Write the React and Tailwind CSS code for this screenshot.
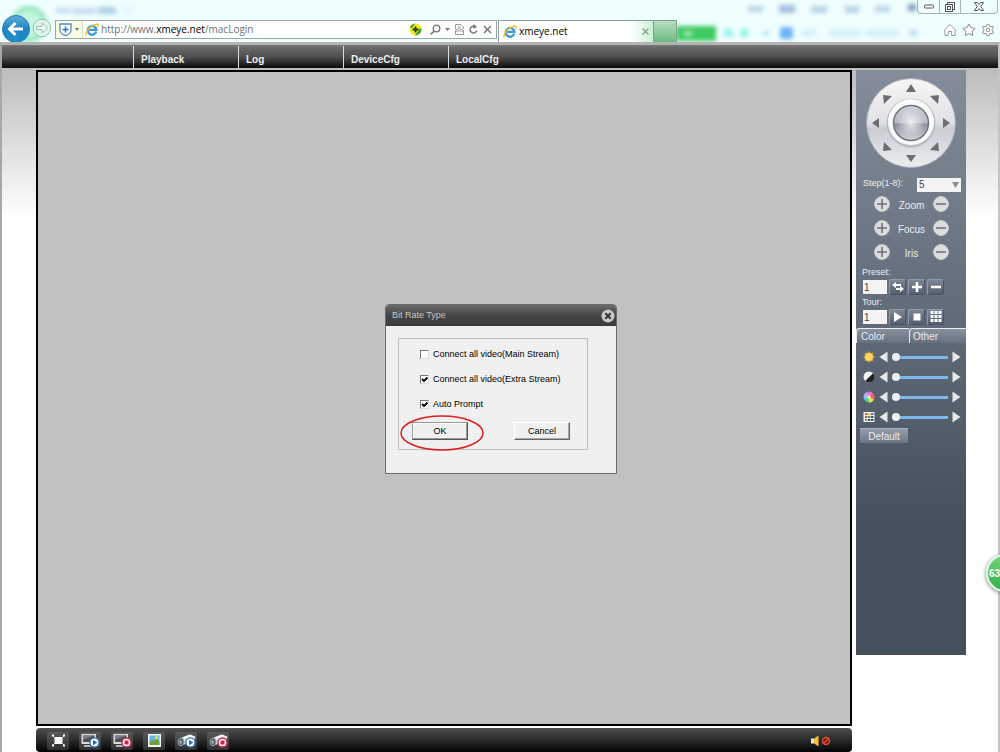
import React, { useState } from 'react';
import { Star, Settings } from 'lucide-react';

const NAV_ITEMS = ['Playback', 'Log', 'DeviceCfg', 'LocalCfg'];

const PTZ_ARROWS = [
    { name: 'Up', x: 45, y: 10, d: 'M-5 4 L0 -4 L5 4Z' },
    { name: 'Up right', x: 69, y: 21, d: 'M-5 -3 L4 -4 L3 5Z' },
    { name: 'Right', x: 80, y: 45, d: 'M-3 -5 L4 0 L-3 5Z' },
    { name: 'Down right', x: 69, y: 69, d: 'M3 -5 L4 4 L-5 3Z' },
    { name: 'Down', x: 45, y: 80, d: 'M-5 -3 L5 -3 L0 4Z' },
    { name: 'Down left', x: 21, y: 69, d: 'M-3 -5 L5 3 L-4 4Z' },
    { name: 'Left', x: 10, y: 45, d: 'M3 -5 L-4 0 L3 5Z' },
    { name: 'Up left', x: 21, y: 21, d: 'M-4 -4 L5 -3 L-3 5Z' },
];

const IeLogo = () => (
    <svg viewBox="0 0 14 14" className="w-[14px] h-[14px] shrink-0" aria-hidden="true">
        <path d="M11.3 8.7 A4.4 4.4 0 1 1 11.5 6.9 L4 6.9" fill="none" stroke="#3a9bdc" strokeWidth="2.3" />
        <path d="M1.4 12.6 C-0.6 10.5 5 2.5 11 1.2 C13.6 0.7 13.6 2.2 12.6 4" fill="none" stroke="#f0bd2c" strokeWidth="1.4" />
    </svg>
);

const BackdropBlurs = () => (
    <div className="absolute inset-0 overflow-hidden pointer-events-none" aria-hidden="true">
        <svg className="absolute left-0 top-0 w-[320px] h-[42px]" viewBox="0 0 320 42">
            <g style={{ filter: 'blur(2px)' }}>
                <circle cx="29" cy="24" r="16" fill="#c3f5dc" stroke="#8de6bd" strokeWidth="4" />
                <g fill="#c3dcf0">
                    <rect x="56" y="8" width="14" height="5" />
                    <rect x="72" y="8" width="24" height="6" />
                    <rect x="98" y="7" width="18" height="7" fill="#afd0e8" />
                    <rect x="124" y="8" width="8" height="4" fill="#ddeffa" />
                </g>
            </g>
        </svg>
        <svg className="absolute right-0 top-0 w-[330px] h-[42px]" viewBox="0 0 330 42">
            <g style={{ filter: 'blur(2px)' }}>
                <g fill="#b9d5e8">
                    <rect x="78" y="6" width="15" height="6" />
                    <rect x="109" y="5" width="16" height="8" fill="#a3c0dc" />
                    <rect x="141" y="6" width="16" height="7" />
                    <rect x="175" y="6" width="14" height="7" />
                    <rect x="205" y="6" width="15" height="6" />
                    <rect x="238" y="4" width="8" height="7" fill="#7f9fc0" />
                </g>
                <rect x="6" y="26" width="40" height="15" fill="#3ecb62" />
                <rect x="14" y="31" width="8" height="5" fill="#a5ecb8" />
                <rect x="54" y="29" width="9" height="8" fill="#9af4ec" />
                <rect x="71" y="29" width="7" height="8" fill="#8af2e4" />
                <rect x="92" y="32" width="7" height="3" fill="#a5dcf0" />
                <rect x="110" y="27" width="13" height="12" rx="3" fill="#6fb2fb" />
                <g fill="#d2eef8">
                    <rect x="132" y="30" width="14" height="6" />
                    <rect x="160" y="30" width="30" height="6" />
                    <rect x="195" y="30" width="34" height="6" />
                    <rect x="240" y="30" width="7" height="6" fill="#b8dcf2" />
                </g>
            </g>
        </svg>
    </div>
);

const AddressField = () => {
    const [editing, setEditing] = useState(false);
    const [url, setUrl] = useState('http://www.xmeye.net/macLogin');
    const [before, after] = url.split('xmeye.net');

    if (editing) {
        return (
            <input
                type="text"
                aria-label="Address"
                autoFocus
                value={url}
                onChange={(e) => setUrl(e.target.value)}
                onBlur={() => setEditing(false)}
                className="flex-1 min-w-0 text-[10px] outline-none"
            />
        );
    }
    return (
        <button type="button" onClick={() => setEditing(true)} className="flex-1 min-w-0 text-left text-[10px] text-[#6c7378] whitespace-nowrap">
            {before}<span className="text-black">{after === undefined ? '' : 'xmeye.net'}</span>{after}
        </button>
    );
};

const BrowserBar = () => (
    <header className="relative h-[42px] bg-[#effefe] font-['Open_Sans',sans-serif]">
        <BackdropBlurs />
        <div className="relative h-full flex pt-[20px]">
            <div className="w-[55px] shrink-0 flex items-center -mt-[6px]">
                <button aria-label="Back" className="ml-px shrink-0">
                    <svg viewBox="0 0 30 28" className="w-[30px] h-[28px]">
                        <defs>
                            <linearGradient id="back" x1="0" y1="0" x2="0" y2="1">
                                <stop offset="0" stopColor="#5fb0dc" />
                                <stop offset="0.5" stopColor="#1f83bf" />
                                <stop offset="1" stopColor="#1b8fd0" />
                            </linearGradient>
                        </defs>
                        <circle cx="15" cy="15" r="13.5" fill="url(#back)" stroke="#2b7fb0" />
                        <path d="M22 15 H9 M14.5 9 L8.5 15 L14.5 21" fill="none" stroke="#fff" strokeWidth="3" />
                    </svg>
                </button>
                <button aria-label="Forward" className="ml-px shrink-0">
                    <svg viewBox="0 0 20 20" className="w-[20px] h-[20px]">
                        <circle cx="10" cy="10" r="8.8" fill="#d9f5e8" stroke="#9dbdb8" />
                        <path d="M4.5 8.5 H10 V5 L15.5 10 L10 15 V11.5 H4.5Z" fill="#effbf7" stroke="#9dbdb8" />
                    </svg>
                </button>
            </div>
            <div className="w-[442px] h-[19px] shrink-0 flex items-center border border-[#9aa5aa] bg-white">
                <button aria-label="Site security" className="h-full w-[27px] shrink-0 flex items-center justify-center gap-[3px] bg-[#fbfde2] border-r border-[#d5dcc0]">
                    <svg viewBox="0 0 13 13" className="w-[13px] h-[13px]">
                        <path d="M1 1 H12 V7 C12 10 9 12 6.5 12.5 C4 12 1 10 1 7Z" fill="#fff" stroke="#4b8bc8" strokeWidth="1.3" />
                        <path d="M6.5 3.5 V9.5 M3.5 6.5 H9.5" stroke="#2f6fb5" strokeWidth="1.5" />
                    </svg>
                    <svg viewBox="0 0 4 3" className="w-[4px] h-[3px]"><path d="M0 0 H4 L2 3Z" fill="#777" /></svg>
                </button>
                <div className="w-[18px] shrink-0 pl-[2px]"><IeLogo /></div>
                <AddressField />
                <div className="flex items-center gap-[5px] pr-[4px] text-[#777]">
                    <button aria-label="Add site">
                        <svg viewBox="0 0 13 13" className="w-[13px] h-[13px]">
                            <circle cx="6.5" cy="6.5" r="6" fill="#f5e71c" />
                            <path d="M6 12.5 A6 6 0 0 0 12.5 6 C11 4 9 8 6 12.5Z M1 5 A6 6 0 0 1 6 0.5 L3 5Z" fill="#3ea53a" />
                            <path d="M6.5 3.5 V9.5 M3.5 6.5 H9.5" stroke="#1d3d10" strokeWidth="1.8" />
                        </svg>
                    </button>
                    <button aria-label="Search" className="flex items-center gap-[4px] ml-[3px]">
                        <svg viewBox="0 0 11 11" className="w-[11px] h-[11px]">
                            <circle cx="6.5" cy="4.5" r="3.3" fill="none" stroke="currentColor" strokeWidth="1.3" />
                            <path d="M4.2 7 L0.8 10.4" stroke="currentColor" strokeWidth="1.6" />
                        </svg>
                        <svg viewBox="0 0 5 3" className="w-[5px] h-[3px]"><path d="M0 0 H5 L2.5 3Z" fill="currentColor" /></svg>
                    </button>
                    <button aria-label="Compatibility view">
                        <svg viewBox="0 0 9 11" className="w-[9px] h-[11px]">
                            <path d="M0.5 5 V0.5 H6 L8.5 3 V4 L6.5 6 L4.5 4 L2.5 6Z M0.5 6.5 L2.5 8 L4.5 6 L6.5 8 L8.5 6 V10.5 H0.5Z M2.5 3 H6" fill="none" stroke="#999" />
                        </svg>
                    </button>
                    <button aria-label="Refresh">
                        <svg viewBox="0 0 9 11" className="w-[9px] h-[11px]">
                            <path d="M6.5 2.8 A3.4 3.4 0 1 0 7.8 6.5" fill="none" stroke="currentColor" strokeWidth="1.5" />
                            <path d="M4.5 0 L8 3 L4.5 5Z" fill="currentColor" />
                        </svg>
                    </button>
                    <button aria-label="Stop">
                        <svg viewBox="0 0 9 9" className="w-[9px] h-[9px]"><path d="M1 1 L8 8 M8 1 L1 8" stroke="currentColor" strokeWidth="1.5" /></svg>
                    </button>
                </div>
            </div>
            <div className="ml-px w-[156px] shrink-0 flex items-center px-[4px] gap-[2px] border border-b-0 border-[#8d9a9a] bg-linear-to-r from-white from-85% to-[#c9f2d4]">
                <IeLogo />
                <span className="flex-1 text-[10px] text-black">xmeye.net</span>
                <button aria-label="Close tab">
                    <svg viewBox="0 0 7 7" className="w-[7px] h-[7px]"><path d="M0.5 0.5 L6.5 6.5 M6.5 0.5 L0.5 6.5" stroke="#8a9a8f" strokeWidth="1.3" /></svg>
                </button>
            </div>
            <button aria-label="New tab" className="w-[23px] shrink-0 border border-l-0 border-b-0 border-[#88a090] bg-linear-to-b from-[#b5dfc2] to-[#6db883]" />
            <div className="flex-1 flex justify-end items-center gap-[5px] pr-[5px] pb-[3px] text-[#999]">
                <button aria-label="Home">
                    <svg viewBox="0 0 14 14" className="w-[14px] h-[14px]">
                        <path d="M1 7.5 L7 1.5 L13 7.5 L12 8.2 V12.5 H8.7 V8.5 H5.3 V12.5 H2 V8.2Z" fill="#fff" stroke="currentColor" strokeLinejoin="round" />
                    </svg>
                </button>
                <button aria-label="Favorites"><Star className="w-[14px] h-[14px]" strokeWidth={1.8} fill="#fff" /></button>
                <button aria-label="Tools"><Settings className="w-[14px] h-[14px]" strokeWidth={1.8} fill="#fff" /></button>
            </div>
        </div>
        <div className="absolute right-[2px] top-0 h-[14px] w-[81px] flex border border-t-0 border-[#a7b4b8] rounded-b-[4px]">
            <button aria-label="Minimize" className="w-[22px] flex items-center justify-center border-r border-[#a7b4b8]">
                <svg viewBox="0 0 10 5" className="w-[10px] h-[5px]"><rect x="0.5" y="1" width="9" height="3" rx="1" fill="#fff" stroke="#555" /></svg>
            </button>
            <button aria-label="Restore" className="w-[21px] flex items-center justify-center border-r border-[#a7b4b8]">
                <svg viewBox="0 0 10 10" className="w-[10px] h-[10px]">
                    <rect x="2.5" y="0.5" width="7" height="7" fill="#fff" stroke="#555" />
                    <rect x="0.5" y="2.5" width="7" height="7" fill="#fff" stroke="#555" />
                    <rect x="2.5" y="4.5" width="3" height="3" fill="none" stroke="#555" />
                </svg>
            </button>
            <button aria-label="Close" className="flex-1 flex items-center justify-center">
                <svg viewBox="0 0 10 9" className="w-[10px] h-[9px]">
                    <path d="M0.5 0.5 H3.5 L5 2.5 L6.5 0.5 H9.5 L6.8 4.5 L9.5 8.5 H6.5 L5 6.5 L3.5 8.5 H0.5 L3.2 4.5Z" fill="#fff" stroke="#555" />
                </svg>
            </button>
        </div>
    </header>
);

const PtzPad = () => (
    <div className="relative w-[90px] h-[90px] mx-auto">
        <svg viewBox="0 0 90 90" className="absolute inset-0 w-full h-full" aria-hidden="true">
            <defs>
                <linearGradient id="ring" x1="0" y1="0" x2="0" y2="1">
                    <stop offset="0" stopColor="#f6f6f6" />
                    <stop offset="0.5" stopColor="#e0e1e4" />
                    <stop offset="0.56" stopColor="#c9ccd3" />
                    <stop offset="1" stopColor="#eceef0" />
                </linearGradient>
                <linearGradient id="ball" x1="0" y1="0" x2="0" y2="1">
                    <stop offset="0" stopColor="#ced2d9" />
                    <stop offset="0.48" stopColor="#b5bac3" />
                    <stop offset="0.54" stopColor="#8b929e" />
                    <stop offset="1" stopColor="#d2d6dc" />
                </linearGradient>
                <radialGradient id="shine">
                    <stop offset="0" stopColor="#fff" stopOpacity="0.8" />
                    <stop offset="1" stopColor="#fff" stopOpacity="0" />
                </radialGradient>
            </defs>
            <circle cx="45" cy="45" r="44.5" fill="url(#ring)" stroke="#a6abb4" />
            <circle cx="45" cy="45" r="24.5" fill="#b9bcc3" />
            <circle cx="45" cy="44" r="23" fill="#fafafa" />
            <circle cx="45" cy="45" r="17.5" fill="url(#ball)" stroke="#6f7784" strokeWidth="1.5" />
            <circle cx="45" cy="45" r="14" fill="url(#shine)" />
        </svg>
        {PTZ_ARROWS.map((a) => (
            <button
                key={a.name}
                aria-label={a.name}
                className="absolute w-[12px] h-[12px]"
                style={{ left: a.x - 6, top: a.y - 6 }}
            >
                <svg viewBox="-6 -6 12 12" className="w-[12px] h-[12px]"><path d={a.d} fill="#6b6d70" /></svg>
            </button>
        ))}
    </div>
);

const RoundButton = ({ label, plus }) => (
    <button aria-label={label} className="shrink-0">
        <svg viewBox="0 0 16 16" className="w-[16px] h-[16px]">
            <circle cx="8" cy="8" r="7.5" fill="#dcdddf" stroke="#c4c6ca" />
            <path d={plus ? 'M3 8 H13 M8 3 V13' : 'M3 8 H13'} stroke="#6b6e73" strokeWidth="1.5" />
        </svg>
    </button>
);

const SquareButton = ({ label, children }) => (
    <button
        aria-label={label}
        className="w-[17px] h-[16px] flex items-center justify-center rounded-[2px] border border-t-[#909aa9] border-l-[#909aa9] border-r-[#4b5462] border-b-[#4b5462] bg-linear-to-b from-[#7b8595] to-[#565f6e]"
    >
        <svg viewBox="0 0 12 12" className="w-[12px] h-[12px]">{children}</svg>
    </button>
);

const NumberRow = ({ id, label, children }) => {
    const [value, setValue] = useState('1');
    return (
        <div>
            <label htmlFor={id} className="block pl-[6px] text-[9px] leading-[14px]">{label}</label>
            <div className="flex items-center gap-[2px] pl-[7px] h-[16px]">
                <input
                    id={id}
                    type="text"
                    value={value}
                    onChange={(e) => setValue(e.target.value)}
                    className="w-[24px] h-[14px] bg-[#f4f4f4] text-[#444] text-[10px] leading-[12px] pl-px"
                />
                {children}
            </div>
        </div>
    );
};

const SLIDERS = [
    {
        name: 'Brightness',
        icon: (
            <>
                <path d="M6 0 L7.5 2 L10.2 1.8 L10 4.5 L12 6 L10 7.5 L10.2 10.2 L7.5 10 L6 12 L4.5 10 L1.8 10.2 L2 7.5 L0 6 L2 4.5 L1.8 1.8 L4.5 2Z" fill="#d9a433" />
                <circle cx="6" cy="6" r="3.8" fill="#fbd768" />
            </>
        ),
    },
    {
        name: 'Contrast',
        icon: (
            <>
                <circle cx="6" cy="6" r="5.5" fill="#f3f3f3" />
                <path d="M10 2.2 A5.5 5.5 0 0 1 2.2 10Z" fill="#222" />
            </>
        ),
    },
    {
        name: 'Saturation',
        icon: (
            <>
                <path d="M6 6 L0.5 6 A5.5 5.5 0 0 1 4 0.9Z" fill="#c9a5f5" />
                <path d="M6 6 L4 0.9 A5.5 5.5 0 0 1 10 2.2Z" fill="#f06fd0" />
                <path d="M6 6 L10 2.2 A5.5 5.5 0 0 1 11 8.4Z" fill="#f26a54" />
                <path d="M6 6 L11 8.4 A5.5 5.5 0 0 1 6 11.5Z" fill="#e9e04e" />
                <path d="M6 6 L6 11.5 A5.5 5.5 0 0 1 1.5 9Z" fill="#5ad66a" />
                <path d="M6 6 L1.5 9 A5.5 5.5 0 0 1 0.5 6Z" fill="#4fd8f0" />
                <circle cx="6" cy="6" r="1.8" fill="#fff" opacity="0.7" />
            </>
        ),
    },
    {
        name: 'Hue',
        icon: (
            <>
                <rect x="0.5" y="1" width="11" height="10" fill="#f3f3f3" />
                <path d="M2 3.2 H4.5 M2 6 H4.5" stroke="#d0503c" strokeWidth="1.8" />
                <path d="M5 3.2 H7.5" stroke="#e8b82d" strokeWidth="1.8" />
                <path d="M8 3.2 H10.5 M8 6 H10.5" stroke="#454e9c" strokeWidth="1.8" />
                <path d="M5 6 H7.5 M2 8.8 H4.5" stroke="#4a9e58" strokeWidth="1.8" />
                <path d="M5 8.8 H7.5 M8 8.8 H10.5" stroke="#2d4354" strokeWidth="1.8" />
            </>
        ),
    },
];

const SliderRow = ({ name, icon }) => {
    const [value, setValue] = useState(0);
    return (
        <div className="flex items-center h-[20px] pl-[7px] pr-[5px]">
            <svg viewBox="0 0 12 12" className="w-[12px] h-[12px] shrink-0" aria-hidden="true">{icon}</svg>
            <button aria-label={`Decrease ${name}`} onClick={() => setValue(Math.max(0, value - 5))} className="ml-[4px] shrink-0">
                <svg viewBox="0 0 9 12" className="w-[9px] h-[12px]"><path d="M8.5 0.5 V11.5 L0.5 6Z" fill="#e6e8ea" /></svg>
            </button>
            <input
                type="range"
                aria-label={name}
                min="0"
                max="100"
                value={value}
                onChange={(e) => setValue(Number(e.target.value))}
                className="flex-1 min-w-0 mx-[4px] h-[8px] appearance-none bg-transparent [&::-webkit-slider-runnable-track]:h-[3px] [&::-webkit-slider-runnable-track]:bg-[#7db8ea] [&::-webkit-slider-thumb]:appearance-none [&::-webkit-slider-thumb]:w-[8px] [&::-webkit-slider-thumb]:h-[8px] [&::-webkit-slider-thumb]:-mt-[3px] [&::-webkit-slider-thumb]:rounded-full [&::-webkit-slider-thumb]:bg-[#eeeeee]"
            />
            <button aria-label={`Increase ${name}`} onClick={() => setValue(Math.min(100, value + 5))} className="shrink-0">
                <svg viewBox="0 0 9 12" className="w-[9px] h-[12px]"><path d="M0.5 0.5 V11.5 L8.5 6Z" fill="#e6e8ea" /></svg>
            </button>
        </div>
    );
};

const Sidebar = () => (
    <aside className="w-[110px] h-[585px] shrink-0 flex flex-col text-[10px] text-[#eceef0] bg-linear-to-b from-[#858d9a] to-[#444f5c] to-80%">
        <div className="pt-[8px]"><PtzPad /></div>
        <div className="flex items-center justify-between mt-[9px] pl-[7px] pr-[5px]">
            <label htmlFor="step" className="text-[9px]">Step(1-8):</label>
            <div className="relative w-[44px] h-[14px]">
                <select id="step" defaultValue="5" className="appearance-none w-full h-full bg-[#f4f4f4] text-[#444] leading-[14px] pl-[2px]">
                    {[1, 2, 3, 4, 5, 6, 7, 8].map((n) => <option key={n}>{n}</option>)}
                </select>
                <svg viewBox="0 0 7 6" className="absolute right-[2px] top-[5px] w-[7px] h-[6px] pointer-events-none"><path d="M0 0 H7 L3.5 6Z" fill="#8a8d92" /></svg>
            </div>
        </div>
        <div className="mt-px mb-px">
            {['Zoom', 'Focus', 'Iris'].map((name) => (
                <div key={name} className="flex items-center justify-between h-[24px] pl-[18px] pr-[17px]">
                    <RoundButton label={`${name} in`} plus />
                    <span className="pt-[3px]">{name}</span>
                    <RoundButton label={`${name} out`} />
                </div>
            ))}
        </div>
        <NumberRow id="preset" label="Preset:">
            <SquareButton label="Go to preset">
                <path d="M0 4 L4 1 V3 H9 V5 H4 V7Z M12 8 L8 5 V7 H4 V9 H8 V11Z" fill="#fff" />
            </SquareButton>
            <SquareButton label="Add preset"><path d="M6 1 V11 M1 6 H11" stroke="#fff" strokeWidth="2.5" /></SquareButton>
            <SquareButton label="Remove preset"><path d="M1 6 H11" stroke="#fff" strokeWidth="2.5" /></SquareButton>
        </NumberRow>
        <NumberRow id="tour" label="Tour:">
            <SquareButton label="Start tour"><path d="M2 1 L10 6 L2 11Z" fill="#fff" /></SquareButton>
            <SquareButton label="Stop tour"><rect x="2.5" y="2.5" width="7" height="7" fill="#fff" /></SquareButton>
            <SquareButton label="Tour list">
                <path d="M2 0 V12 M6 0 V12 M10 0 V12" stroke="#fff" strokeWidth="3" strokeDasharray="3 1" />
            </SquareButton>
        </NumberRow>
        <div role="tablist" className="mt-[3px] h-[15px] flex bg-linear-to-b from-[#8b94a2] to-[#66707f]">
            <button role="tab" aria-selected="true" className="w-[53px] text-left pl-[4px] leading-[15px] border-t border-l border-[#eceef0] rounded-tl-[4px]">Color</button>
            <button role="tab" aria-selected="false" className="flex-1 text-left pl-[3px] leading-[15px] border-t border-l border-[#eceef0] rounded-tl-[4px]">Other</button>
        </div>
        <div className="pt-[4px]">
            {SLIDERS.map((s) => <SliderRow key={s.name} name={s.name} icon={s.icon} />)}
        </div>
        <button className="self-start ml-[4px] mt-px w-[48px] h-[15px] leading-[15px] bg-linear-to-b from-[#949daa] to-[#6c7685] border-t border-[#aab1bc]">Default</button>
    </aside>
);

const PlayBadge = () => (
    <>
        <circle cx="13.5" cy="9.5" r="4.6" fill="#fff" stroke="#2e6bb0" strokeWidth="1.4" />
        <path d="M12 6.7 L16.4 9.5 L12 12.3Z" fill="#2e6bb0" />
    </>
);

const StopBadge = () => (
    <>
        <circle cx="13.5" cy="9.5" r="4.6" fill="#fff" stroke="#c4284a" strokeWidth="1.5" />
        <rect x="11.5" y="7.5" width="4" height="4" fill="#c4284a" />
    </>
);

const Monitor = () => (
    <>
        <path d="M0.5 1 H15 V11 H0.5Z" fill="#d8dadb" />
        <path d="M2 2.5 H13.5 V9 H2Z" fill="#4c5054" />
        <path d="M2 2.5 H13.5 L2 7Z" fill="#777c80" />
        <path d="M3 13 H10" stroke="#ddd" strokeWidth="1.5" />
    </>
);

const Camera = () => (
    <>
        <path d="M5 4.5 L13 1.5 L18.5 4 L17 10 L7 11.5Z" fill="#dcdfe2" />
        <path d="M5 4.5 L13 1.5 L18.5 4 L10 6Z" fill="#f6f7f8" />
        <ellipse cx="4" cy="9" rx="3" ry="3.8" fill="#56616b" stroke="#98a4ad" />
        <ellipse cx="3.6" cy="9" rx="1.2" ry="1.8" fill="#a9b8c4" />
    </>
);

const TOOLS = [
    { name: 'Full screen', icon: <><rect x="5.5" y="4" width="8" height="7" fill="#fff" /><path d="M3 2 L6 5 M16 2 L13 5 M3 13 L6 10 M16 13 L13 10" stroke="#ddd" strokeWidth="1" /><path d="M3 1.5 H5 V3.5 H3Z M14 1.5 H16 V3.5 H14Z M3 11.5 H5 V13.5 H3Z M14 11.5 H16 V13.5 H14Z" fill="#fff" /></> },
    { name: 'Play all', icon: <><Monitor /><PlayBadge /></> },
    { name: 'Stop all', icon: <><Monitor /><StopBadge /></> },
    { name: 'Snapshot', icon: <><rect x="3" y="1" width="13" height="13" fill="#f2f6f0" /><rect x="4.5" y="2.5" width="10" height="8" fill="#6db7e6" /><path d="M4.5 12 V9 L7 7 L9 8 L11 5 L14.5 9 V12Z" fill="#6d9e3c" /><circle cx="11.5" cy="4.8" r="1.5" fill="#f5e36b" /></> },
    { name: 'Record all', icon: <><Camera /><PlayBadge /></> },
    { name: 'Stop recording', icon: <><Camera /><StopBadge /></> },
];

const Toolbar = () => (
    <footer className="mt-[2px] h-[24px] flex items-center pl-[11px] pr-[21px] pt-px rounded-[4px] bg-linear-to-b from-[#505050] via-[#2a2a2a] to-[#050505]">
        <div className="flex gap-[10px]">
            {TOOLS.map((t) => (
                <button key={t.name} aria-label={t.name} className="w-[22px] h-[18px] flex items-center justify-center rounded-[2px] bg-linear-to-b from-[#5a5a5a] to-[#303030]">
                    <svg viewBox="0 0 19 15" className="w-[19px] h-[15px]">{t.icon}</svg>
                </button>
            ))}
        </div>
        <button aria-label="Mute" className="ml-auto">
            <svg viewBox="0 0 20 12" className="w-[20px] h-[12px]">
                <path d="M0 3.5 H3 V8.5 H0Z" fill="#e9e9e9" />
                <path d="M2.5 4 L7.5 0.5 V11.5 L2.5 8Z" fill="#f5c62e" />
                <circle cx="15" cy="6" r="3.5" fill="#5a1a10" stroke="#e2502f" strokeWidth="1.5" />
                <path d="M12.5 8.5 L17.5 3.5" stroke="#e2502f" strokeWidth="1.5" />
            </svg>
        </button>
    </footer>
);

const CheckRow = ({ label, initial }) => {
    const [checked, setChecked] = useState(initial);
    return (
        <label className="flex items-center gap-[4px] leading-[12px]">
            <span className="relative flex">
                <input
                    type="checkbox"
                    checked={checked}
                    onChange={() => setChecked(!checked)}
                    className="appearance-none w-[9px] h-[9px] bg-white border border-t-[#777] border-l-[#777] border-r-[#ddd] border-b-[#ddd]"
                />
                {checked && (
                    <svg viewBox="0 0 9 9" className="absolute inset-0 w-[9px] h-[9px] pointer-events-none">
                        <path d="M2 4 L4 6 L7.5 2.5" fill="none" stroke="#000" strokeWidth="1.8" />
                    </svg>
                )}
            </span>
            {label}
        </label>
    );
};

const BitRateDialog = () => (
    <div
        role="dialog"
        aria-label="Bit Rate Type"
        className="w-[232px] rounded-t-[4px] border border-[#6a6a6a] bg-[#f0f0f0] text-[9px] text-black"
    >
        <div className="h-[21px] flex items-center justify-between pl-[6px] pr-px rounded-t-[3px] bg-linear-to-b from-[#6b6b6b] via-[#444] to-[#3c3c3c] text-[#c8c8c8]">
            <span>Bit Rate Type</span>
            <button aria-label="Close dialog">
                <svg viewBox="0 0 14 14" className="w-[14px] h-[14px]">
                    <circle cx="7" cy="7" r="6.5" fill="#c9c9c9" />
                    <path d="M4.3 4.3 L9.7 9.7 M9.7 4.3 L4.3 9.7" stroke="#333" strokeWidth="2" />
                </svg>
            </button>
        </div>
        <div className="mt-[12px] ml-[12px] mr-[28px] mb-[23px] h-[112px] border border-[#bdbdbd] pt-[9px]">
            <div className="flex flex-col items-start gap-[13px] pl-[21px]">
                <CheckRow label="Connect all video(Main Stream)" initial={false} />
                <CheckRow label="Connect all video(Extra Stream)" initial={true} />
                <CheckRow label="Auto Prompt" initial={true} />
            </div>
            <div className="flex justify-between mt-[12px] pl-[13px] pr-[17px]">
                <div className="relative">
                    <button className="w-[56px] h-[18px] leading-[14px] bg-[#f0f0f0] border border-t-[#999] border-l-[#999] border-r-[#555] border-b-[#555] shadow-[inset_-1px_-1px_#999,inset_1px_1px_#fff]">OK</button>
                    <svg viewBox="0 0 84 36" className="absolute -left-[12px] -top-[7px] w-[84px] h-[36px] max-w-none pointer-events-none">
                        <ellipse cx="42" cy="18" rx="41" ry="17" fill="none" stroke="#dc1f1f" strokeWidth="1.5" />
                    </svg>
                </div>
                <button className="w-[56px] h-[18px] leading-[14px] bg-[#f0f0f0] border border-t-white border-l-white border-r-[#666] border-b-[#666] shadow-[inset_-1px_-1px_#aaa]">Cancel</button>
            </div>
        </div>
    </div>
);

const App = () => (
    <div className="relative min-h-screen flex flex-col overflow-hidden bg-white font-['Liberation_Sans',Arial,sans-serif]">
        <BrowserBar />
        <div className="flex-1 flex flex-col border-t-[3px] border-t-[#b4b4b4] border-l-2 border-l-[#a8a8a8] border-r-2 border-r-[#c4c4c4]">
            <nav className="h-[23px] flex pl-[131px] border-t border-[#777] bg-linear-to-b from-[#6e6e6e] via-[#4e4e4e] via-50% to-[#0c0c0c]">
                {NAV_ITEMS.map((item) => (
                    <a key={item} href="#" className="w-[105px] flex items-center pl-[7px] pt-[4px] border-l border-[#ddd] text-[10px] font-bold text-[#eee]">{item}</a>
                ))}
            </nav>
            <div className="flex-1 flex pt-[2px] pl-[34px] bg-linear-to-b from-[#bcbcbc] to-white to-[150px]">
                <main className="flex-1 min-w-0 flex flex-col">
                    <div className="flex-1 border-2 border-black bg-[#c1c1c1]" />
                    <Toolbar />
                </main>
                <div className="ml-[4px] mr-[32px]"><Sidebar /></div>
            </div>
        </div>
        <div className="absolute inset-0 pt-[26px] pl-[2px] flex items-center justify-center pointer-events-none">
            <div className="pointer-events-auto"><BitRateDialog /></div>
        </div>
        <button className="absolute -right-[24px] top-[554px] w-[38px] h-[38px] rounded-full border-2 border-[#dff5e2] bg-linear-to-b from-[#6fd57c] to-[#2fae49] shadow-[0_1px_4px_#777] text-left pl-px text-[10px] font-bold text-white">63</button>
    </div>
);

export default App;
